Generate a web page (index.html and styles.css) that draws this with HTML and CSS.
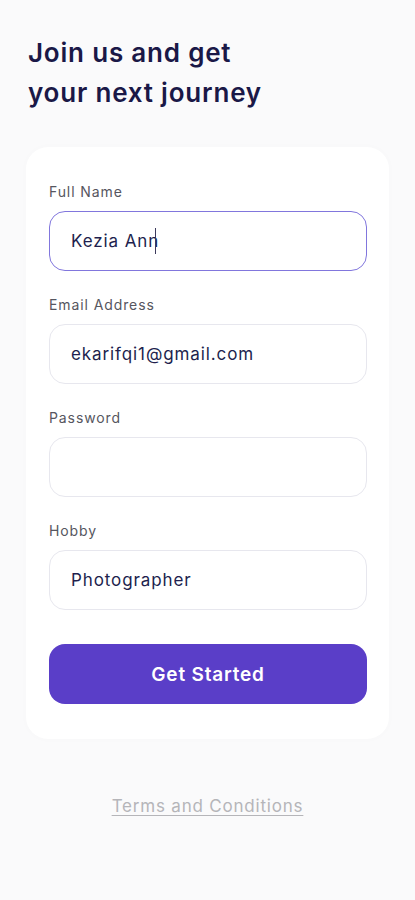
FILE: index.html
```html
<!DOCTYPE html>
<html lang="en">

<head>
    <meta charset="UTF-8">
    <meta name="viewport" content="width=device-width, initial-scale=1.0">
    <title>Sign Up</title>
    <link rel="stylesheet" href="styles.css">
</head>

<body>
    <div class="page">
        <h1 class="title">Join us and get<br>your next journey</h1>

        <form class="card">
            <div class="field">
                <label class="label">Full Name</label>
                <div class="input focused">Kezia Ann<span class="caret"></span></div>
            </div>
            <div class="field">
                <label class="label">Email Address</label>
                <div class="input">ekarifqi1@gmail.com</div>
            </div>
            <div class="field">
                <label class="label">Password</label>
                <div class="input"></div>
            </div>
            <div class="field">
                <label class="label">Hobby</label>
                <div class="input">Photographer</div>
            </div>
            <button type="button" class="btn">Get Started</button>
        </form>

        <a class="terms" href="#">Terms and Conditions</a>
    </div>
</body>

</html>
```

FILE: styles.css
```css
body {
    margin: 0;
    background: #fafafb;
    font-family: 'Inter', 'Noto Sans', sans-serif;
    color: #1f1d4b;
}

.page {
    width: 415px;
    min-height: 900px;
    padding: 33px 26px 0 28px;
    box-sizing: border-box;
    display: flex;
    flex-direction: column;
}

.title {
    margin: 0;
    font-size: 26px;
    font-weight: 600;
    line-height: 40px;
    color: #1a1847;
    letter-spacing: 0.8px;
}

.card {
    margin: 34px 0 0 -2px;
    background: #ffffff;
    border-radius: 22px;
    padding: 35px 22px 35px 23px;
    display: flex;
    flex-direction: column;
    box-shadow: 0 0 10px rgba(0, 0, 0, 0.015);
}

.field {
    display: flex;
    flex-direction: column;
    margin-bottom: 24px;
}

.label {
    font-size: 14px;
    color: #565660;
    line-height: 20px;
    margin-bottom: 9px;
    letter-spacing: 0.9px;
}

.input {
    height: 60px;
    box-sizing: border-box;
    border: 1px solid #e7e7ee;
    border-radius: 16px;
    padding: 0 21px;
    display: flex;
    align-items: center;
    font-size: 17px;
    color: #211f4e;
    letter-spacing: 0.9px;
}

.input.focused {
    border-color: #8176dd;
}

.caret {
    display: inline-block;
    width: 1px;
    height: 26px;
    background: #3c3a5c;
    margin-left: -4px;
}

.btn {
    margin-top: 10px;
    height: 60px;
    border: none;
    border-radius: 16px;
    background: #5a3ec8;
    color: #ffffff;
    font-family: inherit;
    font-size: 19px;
    font-weight: 600;
    letter-spacing: 0.8px;
    cursor: pointer;
}

.terms {
    margin-top: 57px;
    align-self: center;
    margin-left: -2px;
    font-size: 17px;
    color: #b5b5b9;
    letter-spacing: 0.8px;
    text-decoration: underline;
    text-underline-offset: 3px;
}
```
